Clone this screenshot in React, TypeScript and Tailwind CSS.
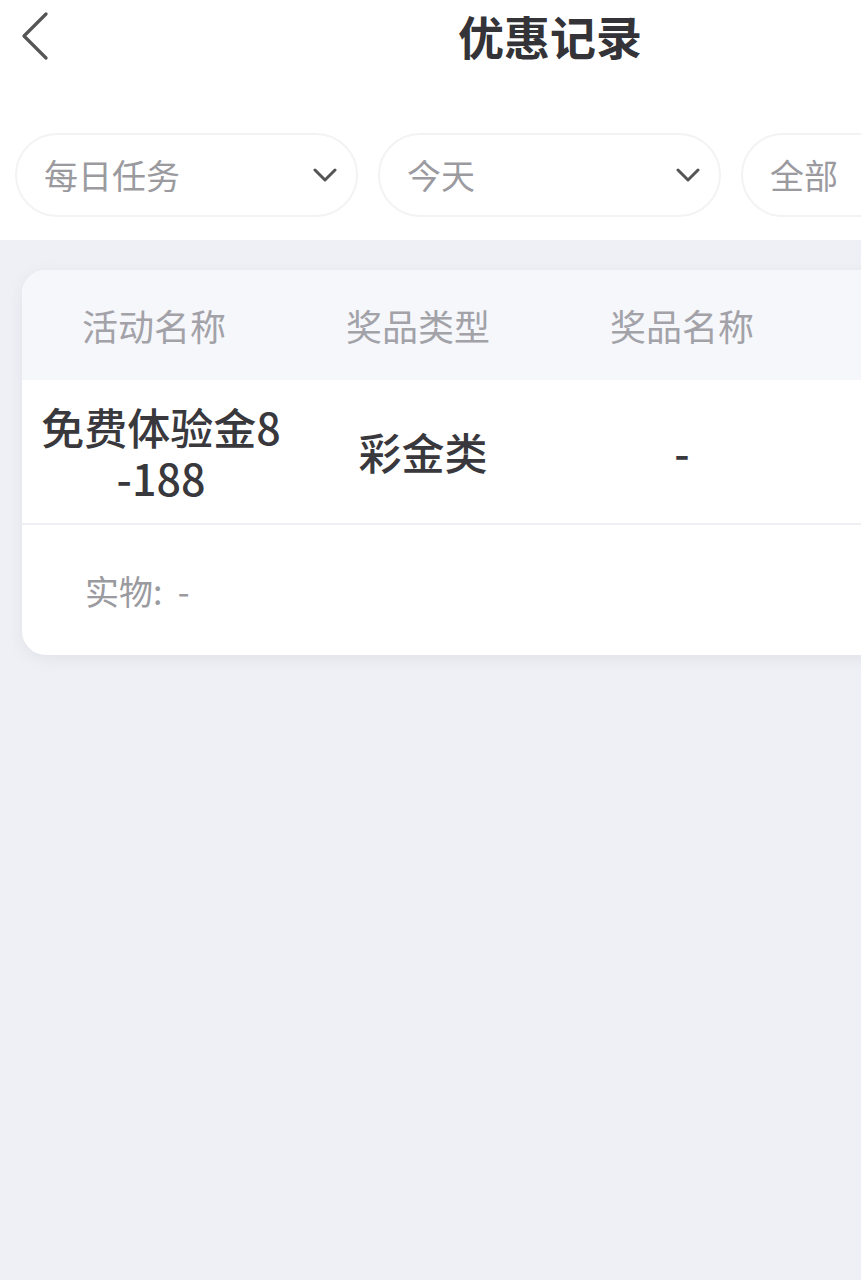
import React from "react";

const Chevron = () => (
  <svg width="24" height="14" viewBox="0 0 24 14" fill="none">
    <path d="M2 2 L12 12 L22 2" stroke="#555" strokeWidth="3" strokeLinecap="round" strokeLinejoin="round" />
  </svg>
);

const Pill = ({ label }: { label: string }) => (
  <div className="flex h-[84px] w-[343px] shrink-0 items-center justify-between rounded-full border-2 border-[#f3f3f5] bg-white pl-[27px] pr-[19px]">
    <span className="text-[34px] leading-none text-[#9a9a9f]">{label}</span>
    <Chevron />
  </div>
);

export default function App() {
  return (
    <div
      className="min-h-screen w-full overflow-hidden bg-[#eff0f5]"
      style={{ fontFamily: '"Noto Sans CJK SC", "Noto Sans", sans-serif' }}
    >
      <div className="w-[1100px]">
        <div className="bg-white pb-[23px]">
          <div className="relative flex h-[82px] items-start justify-center pt-[12px]">
            <div className="absolute left-[20px] top-[12px]">
              <svg width="32" height="48" viewBox="0 0 32 48" fill="none">
                <path d="M26 2 L4 24 L26 46" stroke="#555" strokeWidth="3.2" strokeLinecap="round" strokeLinejoin="round" />
              </svg>
            </div>
            <h1 className="text-[46px] font-semibold leading-none text-[#333338]">优惠记录</h1>
          </div>
          <div className="mt-[51px] flex gap-[20px] pl-[15px]">
            <Pill label="每日任务" />
            <Pill label="今天" />
            <Pill label="全部" />
          </div>
        </div>

        <div className="mx-[22px] mt-[30px] overflow-hidden rounded-[24px] bg-white shadow-[0_4px_14px_rgba(200,204,215,0.35)]">
          <div className="grid h-[110px] grid-cols-4 items-center bg-[#f6f7fb] text-center text-[36px] leading-none text-[#a2a2a8]">
            <div>活动名称</div>
            <div>奖品类型</div>
            <div>奖品名称</div>
            <div />
          </div>
          <div className="grid h-[145px] grid-cols-4 items-center border-b-2 border-[#eeeff3] text-center text-[43px] font-medium text-[#38383d]">
            <div className="pl-[14px] leading-[51px]">
              免费体验金8
              <br />
              -188
            </div>
            <div className="pl-[10px] leading-none">彩金类</div>
            <div className="leading-none">-</div>
            <div />
          </div>
          <div className="flex h-[130px] items-center pl-[63px] text-[34px] text-[#9a9a9f]">
            实物:&nbsp;&nbsp;-
          </div>
        </div>
      </div>
    </div>
  );
}
